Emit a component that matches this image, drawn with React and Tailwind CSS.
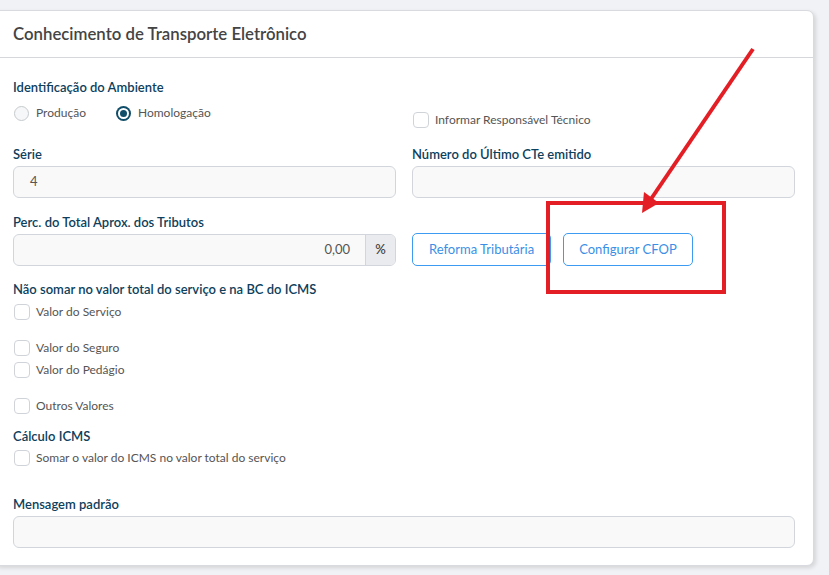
const font = { fontFamily: 'Lato, "Open Sans", sans-serif' };

function Label({ children, className = '' }) {
  return (
    <div className={`h-[18px] leading-[18px] text-[13px] font-semibold text-[#0e3f5c] ${className}`}>
      {children}
    </div>
  );
}

function Check({ label, className = '' }) {
  return (
    <div className={`flex items-center h-[22px] ${className}`}>
      <span className="w-[16px] h-[16px] rounded-[4px] border border-[#d0d4d9] bg-white ml-[1px]" />
      <span className="ml-[6px] text-[12px] text-[#555]">{label}</span>
    </div>
  );
}

function Input({ value = '', className = '' }) {
  return (
    <div className={`h-[32px] rounded-[6px] border border-[#d2d6dc] bg-[#f9f9f9] flex items-center px-[16px] text-[13px] text-[#555] ${className}`}>
      {value}
    </div>
  );
}

export default function App() {
  return (
    <div className="relative w-[829px] h-[575px] bg-[#f1f2f5] overflow-hidden pt-[10px]" style={font}>
      <div className="-ml-[7px] w-[821px] h-[556px] bg-white rounded-[7px] border border-[#d8dadf] shadow-[2px_2px_4px_rgba(0,0,0,0.12)]">
        <div className="h-[47px] border-b border-[#d5d7db] flex items-center pl-[19px]">
          <span className="text-[16.8px] font-semibold text-[#444]">Conhecimento de Transporte Eletrônico</span>
        </div>
        <div className="pl-[19px] pr-[18px] pt-[20px]">
          <div className="grid grid-cols-2 gap-x-[16px]">
            <div>
              <Label>Identificação do Ambiente</Label>
              <div className="flex items-center h-[18px] mt-[8px] text-[12px] text-[#555]">
                <span className="w-[15px] h-[15px] rounded-full border border-[#c6cace] bg-[#f6f7f8] ml-[1px]" />
                <span className="ml-[7px]">Produção</span>
                <span className="w-[15px] h-[15px] rounded-full bg-[#0f4d68] flex items-center justify-center ml-[30px]">
                  <span className="w-[11px] h-[11px] rounded-full bg-white flex items-center justify-center">
                    <span className="w-[7px] h-[7px] rounded-full bg-[#0f4d68]" />
                  </span>
                </span>
                <span className="ml-[7px]">Homologação</span>
              </div>
            </div>
            <div className="pt-[31px]">
              <Check label="Informar Responsável Técnico" />
            </div>

            <div className="mt-[14px]">
              <Label>Série</Label>
              <Input value="4" className="mt-[3px]" />
            </div>
            <div className="mt-[14px]">
              <Label>Número do Último CTe emitido</Label>
              <Input className="mt-[3px]" />
            </div>

            <div className="mt-[15px]">
              <Label>Perc. do Total Aprox. dos Tributos</Label>
              <div className="mt-[3px] h-[32px] rounded-[6px] border border-[#d2d6dc] bg-[#f9f9f9] flex overflow-hidden text-[13px] text-[#555]">
                <div className="flex-1 flex items-center justify-end pr-[15px]">0,00</div>
                <div className="w-[30px] bg-[#e9ebee] border-l border-[#d2d6dc] flex items-center justify-center font-semibold text-[#444]">%</div>
              </div>
            </div>
            <div className="mt-[15px] pt-[20px] flex gap-[12px]">
              <button className="h-[33px] px-[16px] rounded-[5px] border border-[#3d9cf2] text-[13px] text-[#3a8fe6] bg-white">Reforma Tributária</button>
              <button className="h-[33px] px-[15px] rounded-[5px] border border-[#3d9cf2] text-[13px] text-[#3a8fe6] bg-white">Configurar CFOP</button>
            </div>
          </div>

          <Label className="mt-[14px]">Não somar no valor total do serviço e na BC do ICMS</Label>
          <Check label="Valor do Serviço" className="mt-[3px]" />
          <Check label="Valor do Seguro" className="mt-[14px]" />
          <Check label="Valor do Pedágio" />
          <Check label="Outros Valores" className="mt-[14px]" />

          <Label className="mt-[10px]">Cálculo ICMS</Label>
          <Check label="Somar o valor do ICMS no valor total do serviço" className="mt-[2px]" />

          <Label className="mt-[26px]">Mensagem padrão</Label>
          <Input className="mt-[3px]" />
        </div>
      </div>

      <div className="absolute left-[546px] top-[201px] w-[180px] h-[93px] border-[4px] border-[#e31e24]" />
      <svg className="absolute left-0 top-0" width="829" height="575">
        <line x1="753" y1="49" x2="651" y2="199" stroke="#e31e24" strokeWidth="4" />
        <polygon points="642,213 644,192 659,203" fill="#e31e24" />
      </svg>
    </div>
  );
}
